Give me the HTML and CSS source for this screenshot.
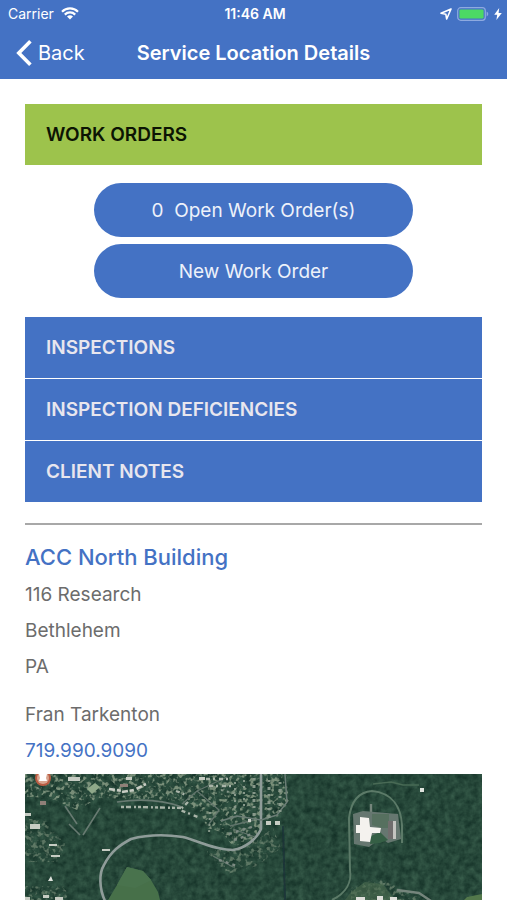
FILE: index.html
```
<!DOCTYPE html>
<html lang="en">
<head>
    <meta charset="UTF-8">
    <meta name="viewport" content="width=device-width, initial-scale=1.0">
    <title>Service Location Details</title>
    <link rel="stylesheet" href="styles.css">
</head>
<body>
    <header class="top-bar">
        <div class="status-bar">
            <div class="status-left">
                <span>Carrier</span>
                <svg width="18" height="13" viewBox="0 0 18 13" fill="none" stroke="#fff" stroke-width="2.2">
                    <path d="M1 4.7a11.4 11.4 0 0 1 16 0"/>
                    <path d="M3.8 7.6a7.4 7.4 0 0 1 10.4 0"/>
                    <path d="M9 12.6L6 9.6a4.3 4.3 0 0 1 6 0z" fill="#fff" stroke="none"/>
                </svg>
            </div>
            <div class="status-time">11:46 AM</div>
            <div class="status-right">
                <svg width="12" height="12" viewBox="0 0 12 12" fill="none" stroke="#fff" stroke-width="1.6" stroke-linejoin="round">
                    <path d="M11 1L1 5.3l4.8.9.9 4.8z"/>
                </svg>
                <svg width="32" height="14" viewBox="0 0 32 14">
                    <rect x=".7" y=".7" width="27.6" height="12.6" rx="3" fill="none" stroke="#8eaae0" stroke-width="1.2"/>
                    <rect x="2.4" y="2.4" width="24.2" height="9.2" rx="1.4" fill="#4cd964"/>
                    <path d="M29.6 4.6c2.2.8 2.2 4 0 4.8z" fill="#8eaae0"/>
                </svg>
                <svg width="8" height="12" viewBox="0 0 8 12" fill="#fff">
                    <path d="M5.2 0L.2 6.8h3L2.4 12l5.4-7H4.6z"/>
                </svg>
            </div>
        </div>
        <nav class="nav-bar">
            <a class="back-link" href="#">
                <svg width="16" height="26" viewBox="0 0 16 26" fill="none" stroke="#fff" stroke-width="3.6">
                    <path d="M14.4 1.3L2.8 13l11.6 11.7"/>
                </svg>
                <span>Back</span>
            </a>
            <h1>Service Location Details</h1>
        </nav>
    </header>

    <main class="content">
        <button class="section-header active" type="button">WORK ORDERS</button>
        <div class="work-orders">
            <button class="pill" type="button">0&nbsp; Open Work Order(s)</button>
            <button class="pill" type="button">New Work Order</button>
        </div>
        <div class="sections">
            <button class="section-header" type="button">INSPECTIONS</button>
            <button class="section-header" type="button">INSPECTION DEFICIENCIES</button>
            <button class="section-header" type="button">CLIENT NOTES</button>
        </div>

        <hr>

        <section class="location">
            <h2>ACC North Building</h2>
            <p>116 Research</p>
            <p>Bethlehem</p>
            <p>PA</p>
            <p class="contact">Fran Tarkenton</p>
            <p><a href="tel:7199909090">719.990.9090</a></p>
        </section>

        <div class="map">
            <svg viewBox="0 0 457 126" preserveAspectRatio="xMinYMin slice" role="img" aria-label="Satellite map">
                <defs>
                    <filter id="trees" x="0" y="0" width="100%" height="100%" color-interpolation-filters="sRGB">
                        <feTurbulence type="fractalNoise" baseFrequency=".15" numOctaves="3" seed="4"/>
                        <feColorMatrix values=".18 0 0 0 .06  .22 0 0 0 .17  .18 0 0 0 .135  0 0 0 0 1"/>
                        <feGaussianBlur stdDeviation=".5"/>
                    </filter>
                    <filter id="lots" x="0" y="0" width="100%" height="100%" color-interpolation-filters="sRGB">
                        <feTurbulence type="fractalNoise" baseFrequency=".24" numOctaves="2" seed="11"/>
                        <feColorMatrix values="0 0 0 0 .56  0 0 0 0 .63  0 0 0 0 .54  5 0 0 0 -2.5" result="n"/>
                        <feComposite in="n" in2="SourceGraphic" operator="in"/>
                        <feGaussianBlur stdDeviation=".5"/>
                    </filter>
                    <filter id="soft"><feGaussianBlur stdDeviation=".6"/></filter>
                </defs>
                <rect width="457" height="126" fill="#28483e"/>
                <rect width="457" height="140" filter="url(#trees)"/>

                <!-- neighbourhoods -->
                <g filter="url(#lots)">
                    <path d="M0 0h262l2 28-12 16-14 2-8 22-22 4-12-14-14-4-8-18-28-10-72-2-22 12-28-12-32-2z" fill-opacity=".8"/>
                    <path d="M0 45h20l20 25-6 18H0zM180 76l40-2 28-20 8 20-24 18-30 8zM0 112h42v14H0zM326 114l28-10 46 22h-74z" fill-opacity=".5"/>
                </g>

                <g filter="url(#soft)">
                    <!-- open fields -->
                    <path d="M102 93l16 4 8 9 7 12 2 8H83l9-15z" fill="#46704a"/>
                    <path d="M102 93l16 4 8 9-16 8-18-3z" fill="#4a734e"/>
                    <path d="M62 15l8-6 5 4-8 7z" fill="#8fa98a"/>
                    <path d="M326 118l14-10 18 2 12 16h-50z" fill="#4b6b50" opacity=".6"/>
                    <path d="M442 123l15-3v6h-18z" fill="#53784b"/>

                    <!-- roads -->
                    <g fill="none" stroke="#8f9c99" stroke-linejoin="round">
                        <path d="M80 127c-6-13-6-28-1-36 7-14 16-20 27-26 15-4 32-5 52-2 16 4 31 13 50 13 12-2 23-10 28-21V0" stroke-width="2.6"/>
                        <path d="M260 0l2 28-10 13-16 5-24-4-16 5" stroke-width="1.5" stroke="#6b7d76"/>
                        <path d="M75 34l-17 27M92 28c20-3 43-3 65 5M44 50l11 11M40 32l12 18" stroke-width="1.6" stroke="#677a71"/>
                        <path d="M157 30l15-13 22 19-10 14M172 17l30-14M205 52l24-6M188 82l20 11M208 55l22 8" stroke-width="1.3" stroke="#62756c"/>
                        <path d="M307 126c14-7 20-18 18-30l-1-52c2-16 9-26 23-27 21 2 29 17 30 34v18" stroke-width="2" stroke="#5b7a67"/>
                        <path d="M346 30v10M372 116l22 3 12 8" stroke-width="2.4" stroke="#75857c"/>
                        <path d="M348 10l18-2 12 3h16" stroke-width="1.4" stroke="#486a55"/>
                    </g>
                    <path d="M258 52l2 74" stroke="#172f38" stroke-width="2" opacity=".7"/>

                    <!-- rows of houses -->
                    <g fill="none" stroke="#a9b4a8" stroke-width="2.4">
                        <path d="M96 33h18l42 1" stroke-dasharray="3 2 5 3 2 2"/>
                        <path d="M84 15l14 2M97 18l12-2 12-6" stroke-dasharray="6 2 4 3" stroke-width="2.6" stroke="#c7ccc3"/>
                        <path d="M181 5h26M184 12h24M151 17l10 4M163 28l-8 8 18 7" stroke-dasharray="4 3 2 4"/>
                        <path d="M244 6v38M255 8v30M229 4v38" stroke-dasharray="2 5 3 4" stroke-width="3" stroke="#87988a"/>
                        <path d="M210 8v34M219 6v30M196 16l16 4M185 38l-1 22" stroke-dasharray="2 4" stroke-width="2" stroke="#87988a"/>
                        <path d="M204 60l26-8M209 66l18-6M194 86l18 6" stroke-dasharray="3 4" stroke="#7d8b83"/>
                    </g>
                    <g fill="#c7ccc3">
                        <path d="M43 3h12v4H43zM5 50h10v5H5zM26 81h9v2h-9zM24 70h8v2h-8zM77 75h8v2h-8zM0 39h6v3H0zM174 3h6v3h-6zM101 3h6v3h-6zM241 47h5v4h-5zM250 47h5v4h-5zM223 45h3v3h-3zM18 121h6v3h-6zM30 123h8v3h-8zM0 123h5v3H0z"/>
                        <path d="M23 107l3-5 2 5zM395 14h4v4h-4z" fill="#dfe3dd"/>
                    </g>
                    <path d="M15 27h6v4h-6zM95 10h8v3h-8z" fill="#8f8078"/>

                    <!-- service building -->
                    <path d="M328 40l10-3 35 3 3 25-13 4-7-5-12 9-15-3z" fill="#66776f"/>
                    <path d="M347 40h17v14h-7l-10-3z" fill="#57705f"/>
                    <path d="M346 62l9-4 8 8-8 3-10 1z" fill="#355f45"/>
                    <path d="M335 43l9 1 1 9 11 1-1 5h-8l-2 9-10-1v-8h-4v-8h4z" fill="#f4f2ee"/>
                    <path d="M363 47h8v18h-8z" fill="#706d6d"/>
                    <path d="M368 47h3v18h-3z" fill="#c4c4c0"/>
                    <path d="M331 123h9v3h-9zM352 122h6v4h-6zM365 123h7v3h-7z" fill="#dfe0db"/>
                </g>

                <circle cx="18" cy="4" r="8" fill="#b95c43"/>
                <circle cx="18" cy="4" r="6" fill="#d8a58f"/>
                <path d="M14 0h8l-1 4 1 3h-8l1-3z" fill="#fff"/>
            </svg>
        </div>
    </main>
</body>
</html>
```
FILE: styles.css
```
* {
    margin: 0;
    padding: 0;
    box-sizing: border-box;
}

body {
    min-height: 100vh;
    display: flex;
    flex-direction: column;
    font-family: 'Inter', 'Roboto', sans-serif;
    font-size: 19px;
    background: #fff;
    color: #6c6c6c;
}

button {
    font: inherit;
    border: none;
    cursor: pointer;
}

a {
    color: #4472c4;
    text-decoration: none;
}

.top-bar {
    background: #4472c4;
    color: #fff;
}

.status-bar,
.nav-bar {
    display: grid;
    grid-template-columns: 1fr auto 1fr;
    align-items: center;
}

.status-bar {
    height: 27px;
    padding: 0 5px 0 8px;
    font-size: 14px;
}

.status-left,
.status-right {
    display: flex;
    align-items: center;
    gap: 7px;
}

.status-right {
    justify-content: flex-end;
    gap: 5px;
}

.status-time {
    font-weight: 600;
}

.nav-bar {
    height: 52px;
    padding: 0 16px;
}

.nav-bar h1 {
    font-size: 20px;
    font-weight: 600;
}

.back-link {
    display: flex;
    align-items: center;
    gap: 6px;
    color: #fff;
    font-size: 20px;
}

.content {
    flex: 1;
    display: flex;
    flex-direction: column;
    padding: 25px 25px 0;
}

.section-header {
    width: 100%;
    height: 61px;
    padding: 0 21px;
    background: #4472c4;
    color: #e8e6ee;
    font-weight: 600;
    text-align: left;
}

.section-header.active {
    background: #9dc34c;
    color: #0c1403;
}

.work-orders {
    display: flex;
    flex-direction: column;
    align-items: center;
    gap: 7px;
    padding: 18px 0 19px;
}

.pill {
    width: 70%;
    height: 54px;
    border-radius: 27px;
    background: #4472c4;
    color: #edf1fa;
}

.sections {
    display: flex;
    flex-direction: column;
    gap: 1px;
}

hr {
    margin: 21px 0 14px;
    border: none;
    border-top: 2px solid #a8a8a8;
}

.location {
    line-height: 36px;
}

.location h2 {
    margin-bottom: 2px;
    color: #4472c4;
    font-size: 22px;
    font-weight: 500;
}

.location .contact {
    margin-top: 12px;
}

.map {
    flex: 1;
    min-height: 120px;
    margin-top: 5px;
    position: relative;
    overflow: hidden;
}

.map svg {
    position: absolute;
    width: 100%;
    height: 100%;
}
```
